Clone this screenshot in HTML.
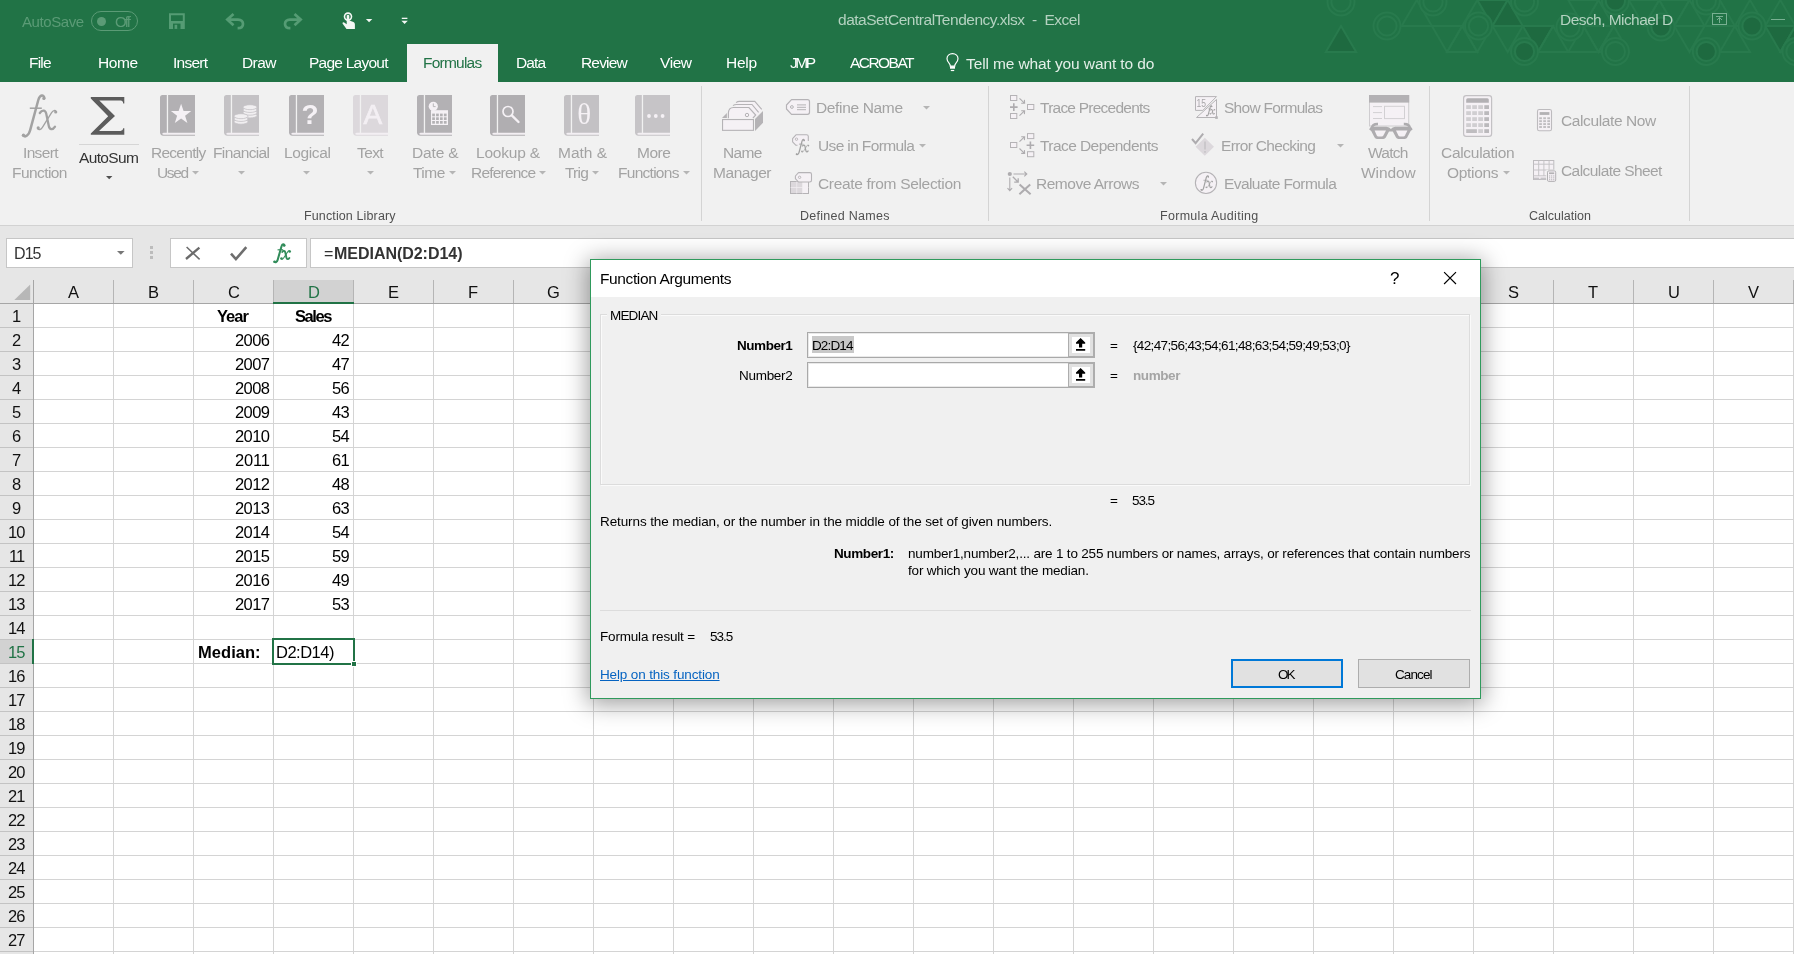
<!DOCTYPE html>
<html><head><meta charset="utf-8"><title>Excel</title>
<style>
html,body{margin:0;padding:0;background:#fff;}
body{width:1794px;height:954px;position:relative;overflow:hidden;font-family:"Liberation Sans",sans-serif;}
.t{position:absolute;white-space:pre;line-height:1;will-change:transform;}
.r{position:absolute;box-sizing:content-box;}
svg{position:absolute;overflow:visible;}
</style></head><body>
<div class="r" style="left:0px;top:0px;width:1794px;height:82px;background:#217346;"></div>
<svg class="r" style="left:0;top:0" width="1794" height="82" viewBox="0 0 1794 82"><polygon points="1401.6,26.0 1431.9,26.0 1416.8,0.0" fill="none" stroke="#287a4d" stroke-width="2"/><polygon points="1462.2,26.0 1492.5,26.0 1477.3,0.0" fill="none" stroke="#287a4d" stroke-width="2"/><polygon points="1477.3,0.0 1507.7,0.0 1492.5,26.0" fill="#1e6a40" stroke="#287a4d" stroke-width="2"/><polygon points="1492.5,26.0 1522.8,26.0 1507.7,0.0" fill="#1e6a40" stroke="#287a4d" stroke-width="2"/><polygon points="1568.2,0.0 1598.5,0.0 1583.4,26.0" fill="none" stroke="#287a4d" stroke-width="2"/><polygon points="1583.4,26.0 1613.7,26.0 1598.5,0.0" fill="none" stroke="#287a4d" stroke-width="2"/><polygon points="1628.8,0.0 1659.2,0.0 1644.0,26.0" fill="none" stroke="#287a4d" stroke-width="2"/><polygon points="1644.0,26.0 1674.3,26.0 1659.2,0.0" fill="none" stroke="#287a4d" stroke-width="2"/><polygon points="1659.2,0.0 1689.5,0.0 1674.3,26.0" fill="none" stroke="#287a4d" stroke-width="2"/><polygon points="1674.3,26.0 1704.6,26.0 1689.5,0.0" fill="none" stroke="#287a4d" stroke-width="2"/><polygon points="1704.6,26.0 1734.9,26.0 1719.8,0.0" fill="none" stroke="#287a4d" stroke-width="2"/><polygon points="1734.9,26.0 1765.2,26.0 1750.0,0.0" fill="none" stroke="#287a4d" stroke-width="2"/><polygon points="1765.2,26.0 1795.5,26.0 1780.3,0.0" fill="none" stroke="#287a4d" stroke-width="2"/><polygon points="1795.5,26.0 1825.8,26.0 1810.7,0.0" fill="#1e6a40" stroke="#287a4d" stroke-width="2"/><polygon points="1810.7,0.0 1841.0,0.0 1825.8,26.0" fill="none" stroke="#287a4d" stroke-width="2"/><polygon points="1325.8,52.0 1356.2,52.0 1341.0,26.0" fill="#1e6a40" stroke="#287a4d" stroke-width="2"/><polygon points="1431.9,26.0 1462.2,26.0 1447.0,52.0" fill="none" stroke="#287a4d" stroke-width="2"/><polygon points="1447.0,52.0 1477.3,52.0 1462.2,26.0" fill="none" stroke="#287a4d" stroke-width="2"/><polygon points="1462.2,26.0 1492.5,26.0 1477.3,52.0" fill="none" stroke="#287a4d" stroke-width="2"/><polygon points="1492.5,26.0 1522.8,26.0 1507.7,52.0" fill="none" stroke="#287a4d" stroke-width="2"/><polygon points="1522.8,26.0 1553.1,26.0 1538.0,52.0" fill="#1e6a40" stroke="#287a4d" stroke-width="2"/><polygon points="1538.0,52.0 1568.2,52.0 1553.1,26.0" fill="none" stroke="#287a4d" stroke-width="2"/><polygon points="1568.2,52.0 1598.5,52.0 1583.4,26.0" fill="none" stroke="#287a4d" stroke-width="2"/><polygon points="1583.4,26.0 1613.7,26.0 1598.5,52.0" fill="none" stroke="#287a4d" stroke-width="2"/><polygon points="1598.5,52.0 1628.8,52.0 1613.7,26.0" fill="none" stroke="#287a4d" stroke-width="2"/><polygon points="1674.3,26.0 1704.6,26.0 1689.5,52.0" fill="none" stroke="#287a4d" stroke-width="2"/><polygon points="1719.8,52.0 1750.0,52.0 1734.9,26.0" fill="none" stroke="#287a4d" stroke-width="2"/><polygon points="1765.2,26.0 1795.5,26.0 1780.3,52.0" fill="#1e6a40" stroke="#287a4d" stroke-width="2"/><polygon points="1780.3,52.0 1810.7,52.0 1795.5,26.0" fill="#1e6a40" stroke="#287a4d" stroke-width="2"/><polygon points="1795.5,26.0 1825.8,26.0 1810.7,52.0" fill="none" stroke="#287a4d" stroke-width="2"/><circle cx="1341" cy="2" r="13.5" fill="#217346" stroke="#287a4d" stroke-width="2"/><circle cx="1341" cy="2" r="9.6" fill="#217346" stroke="#287a4d" stroke-width="2"/><circle cx="1387" cy="26" r="13.5" fill="#217346" stroke="#287a4d" stroke-width="2"/><circle cx="1387" cy="26" r="9.6" fill="#217346" stroke="#287a4d" stroke-width="2"/><circle cx="1433" cy="2" r="13.5" fill="#217346" stroke="#287a4d" stroke-width="2"/><circle cx="1433" cy="2" r="9.6" fill="#217346" stroke="#287a4d" stroke-width="2"/><circle cx="1478.5" cy="26" r="13.5" fill="#217346" stroke="#287a4d" stroke-width="2"/><circle cx="1478.5" cy="26" r="9.6" fill="#217346" stroke="#287a4d" stroke-width="2"/><circle cx="1524.5" cy="51.5" r="13.5" fill="#217346" stroke="#287a4d" stroke-width="2"/><circle cx="1524.5" cy="51.5" r="9.6" fill="#1e6a40" stroke="#287a4d" stroke-width="2"/><circle cx="1524.5" cy="2" r="13.5" fill="#217346" stroke="#287a4d" stroke-width="2"/><circle cx="1524.5" cy="2" r="9.6" fill="#217346" stroke="#287a4d" stroke-width="2"/><circle cx="1570" cy="27" r="13.5" fill="#217346" stroke="#287a4d" stroke-width="2"/><circle cx="1570" cy="27" r="9.6" fill="#217346" stroke="#287a4d" stroke-width="2"/><circle cx="1615.4" cy="51.5" r="13.5" fill="#217346" stroke="#287a4d" stroke-width="2"/><circle cx="1615.4" cy="51.5" r="9.6" fill="#217346" stroke="#287a4d" stroke-width="2"/><circle cx="1615.4" cy="1" r="13.5" fill="#217346" stroke="#287a4d" stroke-width="2"/><circle cx="1615.4" cy="1" r="9.6" fill="#1e6a40" stroke="#287a4d" stroke-width="2"/><circle cx="1661" cy="27" r="13.5" fill="#217346" stroke="#287a4d" stroke-width="2"/><circle cx="1661" cy="27" r="9.6" fill="#1e6a40" stroke="#287a4d" stroke-width="2"/><circle cx="1706.3" cy="51.5" r="13.5" fill="#217346" stroke="#287a4d" stroke-width="2"/><circle cx="1706.3" cy="51.5" r="9.6" fill="#1e6a40" stroke="#287a4d" stroke-width="2"/><circle cx="1706.3" cy="1" r="13.5" fill="#217346" stroke="#287a4d" stroke-width="2"/><circle cx="1706.3" cy="1" r="9.6" fill="#217346" stroke="#287a4d" stroke-width="2"/><circle cx="1752" cy="26" r="13.5" fill="#217346" stroke="#287a4d" stroke-width="2"/><circle cx="1752" cy="26" r="9.6" fill="#1e6a40" stroke="#287a4d" stroke-width="2"/><circle cx="1796" cy="51.5" r="13.5" fill="#217346" stroke="#287a4d" stroke-width="2"/><circle cx="1796" cy="51.5" r="9.6" fill="#217346" stroke="#287a4d" stroke-width="2"/></svg>
<div class="r" style="left:0px;top:82px;width:1794px;height:143px;background:#f1f1f1;"></div>
<div class="r" style="left:0px;top:225px;width:1794px;height:1px;background:#d2d2d2;"></div>
<div class="r" style="left:0px;top:226px;width:1794px;height:78px;background:#e6e6e6;"></div>
<div class="r" style="left:407px;top:44px;width:91px;height:38px;background:#f1f1f1;"></div>
<span class="t" style="left:21.50px;top:14.00px;font-size:15px;color:#5b9b76;letter-spacing:-0.420px;">AutoSave</span>
<div class="r" style="left:91px;top:11px;width:45px;height:18px;border:1px solid #5b9b76;border-radius:10px"></div>
<div class="r" style="left:96.5px;top:16.7px;width:9px;height:9px;border-radius:5px;background:#5b9b76"></div>
<span class="t" style="left:114.70px;top:14.00px;font-size:15px;color:#5b9b76;letter-spacing:-1.935px;">Off</span>
<svg class="r" style="left:0;top:0" width="1794" height="44" viewBox="0 0 1794 44"><path d="M169 13.3 H184.8 V28.9 H169 Z M171 15.3 V21 H182.8 V15.3 Z" fill="#559c74" fill-rule="evenodd"/><rect x="173" y="23.6" width="7.5" height="5.3" fill="#217346"/><rect x="174.6" y="24.8" width="2.6" height="4.1" fill="#559c74"/><path d="M233.5 14 L227.3 19.6 L233.5 25.2 M227.8 19.6 H238 C241.6 19.6 243 22 243 24 C243 26.4 241 28.2 237.6 28.2" fill="none" stroke="#559c74" stroke-width="2.7" stroke-linejoin="miter"/><path d="M294.5 14 L300.7 19.6 L294.5 25.2 M300.2 19.6 H290 C286.4 19.6 285 22 285 24 C285 26.4 287 28.2 290.4 28.2" fill="none" stroke="#559c74" stroke-width="2.7" stroke-linejoin="miter"/><circle cx="348" cy="16.6" r="3.5" fill="none" stroke="#f3f7f4" stroke-width="1.6"/><path d="M346.7 15.5 Q348 14.2 349.3 15.5 V20.5 L353.5 22 Q355 22.6 354.9 24.5 V28.9 H346.5 L342.5 23.6 Q342.3 22.2 343.8 22.2 L346.7 24.2 Z" fill="#f3f7f4"/><path d="M365.9 19 H372.3 L369.1 22.3 Z" fill="#f3f7f4"/><rect x="401.8" y="17.7" width="5.6" height="1.3" fill="#f3f7f4"/><path d="M401.4 20.8 H407.8 L404.6 24 Z" fill="#f3f7f4"/><rect x="1712.5" y="13.5" width="14" height="11" fill="none" stroke="#78b092" stroke-width="1"/><path d="M1716 16.5 H1723 M1719.5 23 V17.5 M1717 20 L1719.5 17.5 L1722 20" fill="none" stroke="#78b092" stroke-width="1"/><rect x="1771" y="19" width="14" height="1" fill="#78b092"/></svg><svg class="r" style="left:0;top:44px" width="1794" height="38" viewBox="0 44 1794 38"><path d="M952.5 53.6 C949.2 53.6 947 56 947 58.8 C947 60.8 948 62 949.2 63.3 C950 64.2 950.3 65 950.3 66.2 H954.7 C954.7 65 955 64.2 955.8 63.3 C957 62 958 60.8 958 58.8 C958 56 955.8 53.6 952.5 53.6 Z" fill="none" stroke="#fff" stroke-width="1.2"/><rect x="950" y="66.2" width="5" height="2.5" fill="#fff"/><path d="M950.8 70.5 H954.2" stroke="#fff" stroke-width="1.2"/></svg>
<span class="t" style="left:838.00px;top:12.00px;font-size:15.5px;color:#b4d2c0;letter-spacing:-0.486px;">dataSetCentralTendency.xlsx  -  Excel</span>
<span class="t" style="left:1560.20px;top:12.00px;font-size:15.5px;color:#b4d2c0;letter-spacing:-0.557px;">Desch, Michael D</span>
<span class="t" style="left:29.30px;top:55.00px;font-size:15.5px;color:#fff;letter-spacing:-0.790px;">File</span>
<span class="t" style="left:98.30px;top:55.00px;font-size:15.5px;color:#fff;letter-spacing:-0.385px;">Home</span>
<span class="t" style="left:172.60px;top:55.00px;font-size:15.5px;color:#fff;letter-spacing:-0.733px;">Insert</span>
<span class="t" style="left:241.50px;top:55.00px;font-size:15.5px;color:#fff;letter-spacing:-0.603px;">Draw</span>
<span class="t" style="left:309.30px;top:55.00px;font-size:15.5px;color:#fff;letter-spacing:-0.755px;">Page Layout</span>
<span class="t" style="left:515.80px;top:55.00px;font-size:15.5px;color:#fff;letter-spacing:-0.884px;">Data</span>
<span class="t" style="left:580.50px;top:55.00px;font-size:15.5px;color:#fff;letter-spacing:-0.834px;">Review</span>
<span class="t" style="left:660.30px;top:55.00px;font-size:15.5px;color:#fff;letter-spacing:-0.419px;">View</span>
<span class="t" style="left:725.50px;top:55.00px;font-size:15.5px;color:#fff;letter-spacing:-0.261px;">Help</span>
<span class="t" style="left:790.30px;top:55.00px;font-size:15.5px;color:#fff;letter-spacing:-2.450px;">JMP</span>
<span class="t" style="left:849.50px;top:55.00px;font-size:15.5px;color:#fff;letter-spacing:-1.547px;">ACROBAT</span>
<span class="t" style="left:422.50px;top:55.00px;font-size:15.5px;color:#217346;letter-spacing:-0.772px;">Formulas</span>
<span class="t" style="left:966.30px;top:56.00px;font-size:15.5px;color:#e4efe8;letter-spacing:-0.114px;">Tell me what you want to do</span>
<div class="r" style="left:701px;top:86px;width:1px;height:135px;background:#d4d4d4;"></div>
<div class="r" style="left:988px;top:86px;width:1px;height:135px;background:#d4d4d4;"></div>
<div class="r" style="left:1429px;top:86px;width:1px;height:135px;background:#d4d4d4;"></div>
<div class="r" style="left:1689px;top:86px;width:1px;height:135px;background:#d4d4d4;"></div>
<span class="t" style="left:22.50px;top:145.00px;font-size:15.5px;color:#a3a3a3;letter-spacing:-0.653px;">Insert</span>
<span class="t" style="left:12.40px;top:165.00px;font-size:15.5px;color:#a3a3a3;letter-spacing:-0.578px;">Function</span>
<span class="t" style="left:78.70px;top:150.00px;font-size:15.5px;color:#333;letter-spacing:-0.659px;">AutoSum</span>
<svg class="r" style="left:105.8px;top:176.0px" width="6.4" height="4.2"><path d="M0 0 H6.4 L3.2 3.2 Z" fill="#505050"/></svg>
<div class="r" style="left:79px;top:144px;width:60px;height:1px;background:#d6d6d6;"></div>
<span class="t" style="left:150.50px;top:145.00px;font-size:15.5px;color:#a3a3a3;letter-spacing:-0.730px;">Recently</span>
<span class="t" style="left:156.50px;top:165.00px;font-size:15.5px;color:#a3a3a3;letter-spacing:-1.359px;">Used</span>
<svg class="r" style="left:192.0px;top:170.8px" width="7" height="4.5"><path d="M0 0 H7 L3.5 3.5 Z" fill="#b5b5b5"/></svg>
<span class="t" style="left:213.30px;top:145.00px;font-size:15.5px;color:#a3a3a3;letter-spacing:-0.629px;">Financial</span>
<svg class="r" style="left:238.3px;top:170.8px" width="7" height="4.5"><path d="M0 0 H7 L3.5 3.5 Z" fill="#b5b5b5"/></svg>
<span class="t" style="left:283.60px;top:145.00px;font-size:15.5px;color:#a3a3a3;letter-spacing:-0.370px;">Logical</span>
<svg class="r" style="left:303.3px;top:170.8px" width="7" height="4.5"><path d="M0 0 H7 L3.5 3.5 Z" fill="#b5b5b5"/></svg>
<span class="t" style="left:357.40px;top:145.00px;font-size:15.5px;color:#a3a3a3;letter-spacing:-0.609px;">Text</span>
<svg class="r" style="left:367.2px;top:170.8px" width="7" height="4.5"><path d="M0 0 H7 L3.5 3.5 Z" fill="#b5b5b5"/></svg>
<span class="t" style="left:411.60px;top:145.00px;font-size:15.5px;color:#a3a3a3;letter-spacing:-0.157px;">Date &amp;</span>
<span class="t" style="left:413.00px;top:165.00px;font-size:15.5px;color:#a3a3a3;letter-spacing:-0.522px;">Time</span>
<svg class="r" style="left:449.4px;top:170.8px" width="7" height="4.5"><path d="M0 0 H7 L3.5 3.5 Z" fill="#b5b5b5"/></svg>
<span class="t" style="left:476.20px;top:145.00px;font-size:15.5px;color:#a3a3a3;letter-spacing:-0.215px;">Lookup &amp;</span>
<span class="t" style="left:470.70px;top:165.00px;font-size:15.5px;color:#a3a3a3;letter-spacing:-0.790px;">Reference</span>
<svg class="r" style="left:539.4px;top:170.8px" width="7" height="4.5"><path d="M0 0 H7 L3.5 3.5 Z" fill="#b5b5b5"/></svg>
<span class="t" style="left:557.50px;top:145.00px;font-size:15.5px;color:#a3a3a3;letter-spacing:-0.021px;">Math &amp;</span>
<span class="t" style="left:564.50px;top:165.00px;font-size:15.5px;color:#a3a3a3;letter-spacing:-0.773px;">Trig</span>
<svg class="r" style="left:592.4px;top:170.8px" width="7" height="4.5"><path d="M0 0 H7 L3.5 3.5 Z" fill="#b5b5b5"/></svg>
<span class="t" style="left:636.50px;top:145.00px;font-size:15.5px;color:#a3a3a3;letter-spacing:-0.470px;">More</span>
<span class="t" style="left:617.50px;top:165.00px;font-size:15.5px;color:#a3a3a3;letter-spacing:-0.724px;">Functions</span>
<svg class="r" style="left:682.8px;top:170.8px" width="7" height="4.5"><path d="M0 0 H7 L3.5 3.5 Z" fill="#b5b5b5"/></svg>
<span class="t" style="left:723.40px;top:145.00px;font-size:15.5px;color:#a3a3a3;letter-spacing:-0.685px;">Name</span>
<span class="t" style="left:713.40px;top:165.00px;font-size:15.5px;color:#a3a3a3;letter-spacing:-0.446px;">Manager</span>
<span class="t" style="left:1368.30px;top:145.00px;font-size:15.5px;color:#a3a3a3;letter-spacing:-0.738px;">Watch</span>
<span class="t" style="left:1361.20px;top:165.00px;font-size:15.5px;color:#a3a3a3;letter-spacing:-0.093px;">Window</span>
<span class="t" style="left:1441.00px;top:145.00px;font-size:15.5px;color:#a3a3a3;letter-spacing:-0.298px;">Calculation</span>
<span class="t" style="left:1447.20px;top:165.00px;font-size:15.5px;color:#a3a3a3;letter-spacing:-0.302px;">Options</span>
<svg class="r" style="left:1502.5px;top:170.8px" width="7" height="4.5"><path d="M0 0 H7 L3.5 3.5 Z" fill="#b5b5b5"/></svg>
<span class="t" style="left:815.70px;top:100.00px;font-size:15.5px;color:#a3a3a3;letter-spacing:-0.346px;">Define Name</span>
<svg class="r" style="left:923.4px;top:105.8px" width="7" height="4.5"><path d="M0 0 H7 L3.5 3.5 Z" fill="#b5b5b5"/></svg>
<span class="t" style="left:818.40px;top:138.00px;font-size:15.5px;color:#a3a3a3;letter-spacing:-0.624px;">Use in Formula</span>
<svg class="r" style="left:919.4px;top:143.8px" width="7" height="4.5"><path d="M0 0 H7 L3.5 3.5 Z" fill="#b5b5b5"/></svg>
<span class="t" style="left:818.40px;top:176.00px;font-size:15.5px;color:#a3a3a3;letter-spacing:-0.330px;">Create from Selection</span>
<span class="t" style="left:1039.50px;top:100.00px;font-size:15.5px;color:#a3a3a3;letter-spacing:-0.765px;">Trace Precedents</span>
<span class="t" style="left:1039.50px;top:138.00px;font-size:15.5px;color:#a3a3a3;letter-spacing:-0.563px;">Trace Dependents</span>
<span class="t" style="left:1036.40px;top:176.00px;font-size:15.5px;color:#a3a3a3;letter-spacing:-0.492px;">Remove Arrows</span>
<svg class="r" style="left:1160.4px;top:181.6px" width="7" height="4.5"><path d="M0 0 H7 L3.5 3.5 Z" fill="#b5b5b5"/></svg>
<span class="t" style="left:1223.70px;top:100.00px;font-size:15.5px;color:#a3a3a3;letter-spacing:-0.732px;">Show Formulas</span>
<span class="t" style="left:1220.60px;top:138.00px;font-size:15.5px;color:#a3a3a3;letter-spacing:-0.659px;">Error Checking</span>
<svg class="r" style="left:1336.5px;top:143.8px" width="7" height="4.5"><path d="M0 0 H7 L3.5 3.5 Z" fill="#b5b5b5"/></svg>
<span class="t" style="left:1223.70px;top:176.00px;font-size:15.5px;color:#a3a3a3;letter-spacing:-0.579px;">Evaluate Formula</span>
<span class="t" style="left:1561.30px;top:113.00px;font-size:15.5px;color:#a3a3a3;letter-spacing:-0.390px;">Calculate Now</span>
<span class="t" style="left:1561.30px;top:163.00px;font-size:15.5px;color:#a3a3a3;letter-spacing:-0.574px;">Calculate Sheet</span>
<span class="t" style="left:304.00px;top:210.00px;font-size:12.5px;color:#505050;letter-spacing:0.125px;">Function Library</span>
<span class="t" style="left:800.30px;top:210.00px;font-size:12.5px;color:#505050;letter-spacing:0.279px;">Defined Names</span>
<span class="t" style="left:1159.50px;top:210.00px;font-size:12.5px;color:#505050;letter-spacing:0.293px;">Formula Auditing</span>
<span class="t" style="left:1528.70px;top:210.00px;font-size:12.5px;color:#505050;letter-spacing:0.006px;">Calculation</span>
<svg class="r" style="left:0;top:82px" width="1794" height="144" viewBox="0 82 1794 144" font-family="Liberation Sans, sans-serif"><g transform="translate(0.00,0.00) scale(1.0000,1.0000)" fill="none" stroke="#a2a2a2" stroke-linecap="round"><path d="M44.3 98.2 C44 94.2 39.9 94.4 38.3 100 L30.1 130.4 C28.8 135.2 25.6 137.8 23 135.4" stroke-width="2.50"/><path d="M29.8 108.2 H41.8" stroke-width="1.50" stroke-linecap="butt"/><path d="M39.8 113 C42.2 109.4 45.4 110 46.2 113.6 L48.8 126 C49.6 129.8 52.6 130.4 55 126.6" stroke-width="2.30"/><path d="M37.6 128.4 C38.8 130.4 40.8 129.8 42.4 127.4 L51.6 112.6 C53.2 110.2 55.2 109.8 56.2 111.6" stroke-width="1.30"/><circle cx="43.9" cy="98.4" r="1.60" fill="#a2a2a2" stroke="none"/><circle cx="23.5" cy="135.2" r="1.60" fill="#a2a2a2" stroke="none"/><circle cx="38.2" cy="127.9" r="1.60" fill="#a2a2a2" stroke="none"/><circle cx="55.7" cy="112" r="1.60" fill="#a2a2a2" stroke="none"/></g><path d="M90.8 96.9 H124.3 V103.6 H123.2 Q123 100.7 120.6 100.6 H99.3 L115 115.9 L99 131 H120.6 Q123 130.9 123.2 128.2 H124.3 V134.8 H90.8 V133.4 L108.2 116.3 L90.8 98.4 Z" fill="#5c5c5c"/><g><path d="M162.5 95 H195 V135.8 H163.2 Q160.2 135.6 160 132.6 V97.5 Q160 95 162.5 95 Z" fill="#b2b0b3"/><rect x="166.8" y="95" width="1.3" height="38" fill="#f1f1f1"/><path d="M163.8 132.7 H195 V134.8 H163.8 Q162.3 134.7 162.3 133.75 Q162.3 132.8 163.8 132.7 Z" fill="#f3eff3"/><polygon points="181.10,103.70 183.57,111.00 191.28,111.09 185.09,115.70 187.39,123.06 181.10,118.60 174.81,123.06 177.11,115.70 170.92,111.09 178.63,111.00" fill="#f5f1f5"/></g><g><path d="M226.5 95 H259 V135.8 H227.2 Q224.2 135.6 224 132.6 V97.5 Q224 95 226.5 95 Z" fill="#c4c2c5"/><rect x="230.8" y="95" width="1.3" height="38" fill="#f1f1f1"/><path d="M227.8 132.7 H259 V134.8 H227.8 Q226.3 134.7 226.3 133.75 Q226.3 132.8 227.8 132.7 Z" fill="#f3eff3"/><ellipse cx="250" cy="115.45" rx="7" ry="2.5" fill="#f1eff1" stroke="#c4c2c5" stroke-width="0.8"/><ellipse cx="250" cy="112.7" rx="7" ry="2.5" fill="#f1eff1" stroke="#c4c2c5" stroke-width="0.8"/><ellipse cx="250" cy="109.95" rx="7" ry="2.5" fill="#f1eff1" stroke="#c4c2c5" stroke-width="0.8"/><ellipse cx="250" cy="107.2" rx="7" ry="2.5" fill="#f1eff1" stroke="#c4c2c5" stroke-width="0.8"/><ellipse cx="241" cy="121.7" rx="7" ry="2.5" fill="#f1eff1" stroke="#c4c2c5" stroke-width="0.8"/><ellipse cx="241" cy="118.95" rx="7" ry="2.5" fill="#f1eff1" stroke="#c4c2c5" stroke-width="0.8"/><ellipse cx="241" cy="116.2" rx="7" ry="2.5" fill="#f1eff1" stroke="#c4c2c5" stroke-width="0.8"/></g><g><path d="M291.5 95 H324 V135.8 H292.2 Q289.2 135.6 289 132.6 V97.5 Q289 95 291.5 95 Z" fill="#b3b1b4"/><rect x="295.8" y="95" width="1.3" height="38" fill="#f1f1f1"/><path d="M292.8 132.7 H324 V134.8 H292.8 Q291.3 134.7 291.3 133.75 Q291.3 132.8 292.8 132.7 Z" fill="#f3eff3"/><text x="301.4" y="124.4" font-size="28" font-weight="bold" fill="#f5f1f5">?</text></g><g><path d="M355.5 95 H388 V135.8 H356.2 Q353.2 135.6 353 132.6 V97.5 Q353 95 355.5 95 Z" fill="#dcd8dc"/><rect x="359.8" y="95" width="1.3" height="38" fill="#f1f1f1"/><path d="M356.8 132.7 H388 V134.8 H356.8 Q355.3 134.7 355.3 133.75 Q355.3 132.8 356.8 132.7 Z" fill="#f3eff3"/><text x="363.5" y="124.3" font-size="28" fill="#f3eff3" stroke="#f3eff3" stroke-width="0.7">A</text></g><g><path d="M419.5 95 H452 V135.8 H420.2 Q417.2 135.6 417 132.6 V97.5 Q417 95 419.5 95 Z" fill="#b3b1b4"/><rect x="423.8" y="95" width="1.3" height="38" fill="#f1f1f1"/><path d="M420.8 132.7 H452 V134.8 H420.8 Q419.3 134.7 419.3 133.75 Q419.3 132.8 420.8 132.7 Z" fill="#f3eff3"/><circle cx="433.3" cy="106.3" r="4.6" fill="#f5f1f5"/><path d="M433.3 103.4 V106.6 H435.6" stroke="#b3b1b4" stroke-width="0.9" fill="none"/><rect x="431" y="110.2" width="17" height="14.8" fill="#f5f1f5"/><rect x="432.2" y="113.6" width="2.7" height="2.7" fill="#b3b1b4"/><rect x="432.2" y="117.3" width="2.7" height="2.7" fill="#b3b1b4"/><rect x="432.2" y="121" width="2.7" height="2.7" fill="#b3b1b4"/><rect x="436.1" y="113.6" width="2.7" height="2.7" fill="#b3b1b4"/><rect x="436.1" y="117.3" width="2.7" height="2.7" fill="#b3b1b4"/><rect x="436.1" y="121" width="2.7" height="2.7" fill="#b3b1b4"/><rect x="440" y="113.6" width="2.7" height="2.7" fill="#b3b1b4"/><rect x="440" y="117.3" width="2.7" height="2.7" fill="#b3b1b4"/><rect x="440" y="121" width="2.7" height="2.7" fill="#b3b1b4"/><rect x="443.9" y="113.6" width="2.7" height="2.7" fill="#b3b1b4"/><rect x="443.9" y="117.3" width="2.7" height="2.7" fill="#b3b1b4"/><rect x="443.9" y="121" width="2.7" height="2.7" fill="#b3b1b4"/></g><g><path d="M492.5 95 H525 V135.8 H493.2 Q490.2 135.6 490 132.6 V97.5 Q490 95 492.5 95 Z" fill="#b0aeb1"/><rect x="496.8" y="95" width="1.3" height="38" fill="#f1f1f1"/><path d="M493.8 132.7 H525 V134.8 H493.8 Q492.3 134.7 492.3 133.75 Q492.3 132.8 493.8 132.7 Z" fill="#f3eff3"/><circle cx="508" cy="111.5" r="5" fill="none" stroke="#f5f1f5" stroke-width="1.7"/><path d="M511.8 115.3 L518.5 122" stroke="#f5f1f5" stroke-width="2.4" stroke-linecap="round"/></g><g><path d="M566.5 95 H599 V135.8 H567.2 Q564.2 135.6 564 132.6 V97.5 Q564 95 566.5 95 Z" fill="#c3c1c4"/><rect x="570.8" y="95" width="1.3" height="38" fill="#f1f1f1"/><path d="M567.8 132.7 H599 V134.8 H567.8 Q566.3 134.7 566.3 133.75 Q566.3 132.8 567.8 132.7 Z" fill="#f3eff3"/><text x="577.2" y="123.5" font-family="Liberation Serif, serif" font-size="29" fill="#f5f1f5">θ</text></g><g><path d="M637.5 95 H670 V135.8 H638.2 Q635.2 135.6 635 132.6 V97.5 Q635 95 637.5 95 Z" fill="#c6c4c7"/><rect x="641.8" y="95" width="1.3" height="38" fill="#f1f1f1"/><path d="M638.8 132.7 H670 V134.8 H638.8 Q637.3 134.7 637.3 133.75 Q637.3 132.8 638.8 132.7 Z" fill="#f3eff3"/><circle cx="649" cy="116" r="1.9" fill="#f5f1f5"/><circle cx="655.8" cy="116" r="1.9" fill="#f5f1f5"/><circle cx="662.6" cy="116" r="1.9" fill="#f5f1f5"/></g><path d="M736.1 102.6 Q737.5 101.4 739.4 101.4 H754.8 L761.9 109.4 L756 117 H736 Z" fill="#f5f1f5"/><path d="M736.1 102.6 Q737.5 101.4 739.4 101.4 H754.8 L761.7 109.3" fill="none" stroke="#b5b3b6" stroke-width="1.1"/><path d="M733 105.7 Q734.4 104.5 736.3 104.5 H752 L758.6 112.4" fill="none" stroke="#b5b3b6" stroke-width="1.1"/><path d="M728.4 118.2 V112.8 Q728.6 107.7 733.4 107.5 H748.9 L755.7 115 L752.9 118.2 Z" fill="#f5f1f5"/><path d="M728.4 118.2 V112.8 Q728.6 107.7 733.4 107.5 H748.9 L755.7 115 L752.9 118.2" fill="none" stroke="#b5b3b6" stroke-width="1.15"/><circle cx="747" cy="115" r="1.7" fill="none" stroke="#b5b3b6" stroke-width="1"/><path d="M722 117.9 H726.9 V113 Z" fill="#b5b3b6"/><rect x="722.55" y="119.55" width="30.9" height="10.8" fill="#f5f1f5" stroke="#b5b3b6" stroke-width="1.1"/><path d="M755 119 L763 111 V122.7 L755 130.9 Z" fill="#b5b3b6"/><path d="M791.5 99.7 H807.5 Q809.5 99.7 809.5 101.7 V112.3 Q809.5 114.3 807.5 114.3 H791.5 L786.5 109 V105 Z" fill="#f5f1f5" stroke="#b5b3b6" stroke-width="1.2" stroke-linejoin="round"/><circle cx="791.9" cy="107" r="1.4" fill="none" stroke="#b5b3b6" stroke-width="1"/><path d="M797 104.9 H806 M797 107.3 H806 M797 109.7 H806" stroke="#b5b3b6" stroke-width="1"/><path d="M797.5 145.3 H796 L792.6 141.8 V138.6 L796 134.8 H806.5 Q808.3 134.8 808.3 136.6 V141" fill="#f5f1f5" stroke="#b5b3b6" stroke-width="1.1" stroke-linejoin="round"/><circle cx="796.5" cy="139.2" r="1.2" fill="none" stroke="#b5b3b6" stroke-width="0.9"/><g transform="translate(788.07,104.04) scale(0.3649,0.3705)" fill="none" stroke="#a2a2a2" stroke-linecap="round"><path d="M44.3 98.2 C44 94.2 39.9 94.4 38.3 100 L30.1 130.4 C28.8 135.2 25.6 137.8 23 135.4" stroke-width="3.62"/><path d="M29.8 108.2 H41.8" stroke-width="2.17" stroke-linecap="butt"/><path d="M39.8 113 C42.2 109.4 45.4 110 46.2 113.6 L48.8 126 C49.6 129.8 52.6 130.4 55 126.6" stroke-width="3.33"/><path d="M37.6 128.4 C38.8 130.4 40.8 129.8 42.4 127.4 L51.6 112.6 C53.2 110.2 55.2 109.8 56.2 111.6" stroke-width="1.89"/><circle cx="43.9" cy="98.4" r="2.32" fill="#a2a2a2" stroke="none"/><circle cx="23.5" cy="135.2" r="2.32" fill="#a2a2a2" stroke="none"/><circle cx="38.2" cy="127.9" r="2.32" fill="#a2a2a2" stroke="none"/><circle cx="55.7" cy="112" r="2.32" fill="#a2a2a2" stroke="none"/></g><rect x="790.5" y="181.5" width="18" height="12" fill="#f5f1f5" stroke="#b5b3b6" stroke-width="1"/><rect x="791" y="182" width="11.5" height="5.5" fill="#dcd8dc"/><rect x="791" y="187.5" width="11.5" height="5.5" fill="#dcd8dc"/><path d="M796.7 181.5 V193.5 M802.6 181.5 V193.5 M790.5 187.5 H808.5" stroke="#f5f1f5" stroke-width="0.8" opacity="0.7"/><path d="M798.5 172.6 H809.8 Q811.5 172.6 811.5 174.3 V180.3 Q811.5 182 809.8 182 H798.5 L795.4 178.6 V176 Z" fill="#f5f1f5" stroke="#b5b3b6" stroke-width="1.1" stroke-linejoin="round"/><circle cx="799.6" cy="177.3" r="1.2" fill="none" stroke="#b5b3b6" stroke-width="0.9"/><rect x="1010.5" y="95.5" width="6.3" height="5" fill="#f5f1f5" stroke="#b5b3b6" stroke-width="1"/><rect x="1010.5" y="113.5" width="6.3" height="5" fill="#f5f1f5" stroke="#b5b3b6" stroke-width="1"/><rect x="1027.5" y="104.5" width="6.3" height="5" fill="#f5f1f5" stroke="#b5b3b6" stroke-width="1"/><path d="M1010 107.1 H1017.6 M1013.8 103.3 V110.9" stroke="#aeacaf" stroke-width="1.6"/><path d="M1019.5 98.3 L1024.6 103.3 M1021.2 103.2 L1024.6 103.3 L1024.4 99.9" fill="none" stroke="#aeacaf" stroke-width="1.1"/><path d="M1019.5 115.7 L1024.6 110.7 M1024.4 114.1 L1024.6 110.7 L1021.2 110.8" fill="none" stroke="#aeacaf" stroke-width="1.1"/><rect x="1010.5" y="142.5" width="6.3" height="5" fill="#f5f1f5" stroke="#b5b3b6" stroke-width="1"/><rect x="1027.5" y="133.6" width="6.3" height="5" fill="#f5f1f5" stroke="#b5b3b6" stroke-width="1"/><rect x="1027.5" y="151.7" width="6.3" height="5" fill="#f5f1f5" stroke="#b5b3b6" stroke-width="1"/><path d="M1026.6 145.2 H1034.2 M1030.4 141.4 V149" stroke="#aeacaf" stroke-width="1.6"/><path d="M1019.5 141.7 L1024.6 136.7 M1024.4 140.1 L1024.6 136.7 L1021.2 136.8" fill="none" stroke="#aeacaf" stroke-width="1.1"/><path d="M1019.5 148.5 L1024.6 153.5 M1021.2 153.4 L1024.6 153.5 L1024.4 150.1" fill="none" stroke="#aeacaf" stroke-width="1.1"/><circle cx="1009.8" cy="174" r="2.1" fill="#aeacaf"/><path d="M1013.5 174.0 L1026.8 174.0 M1024.3 176.3 L1026.8 174.0 L1024.3 171.7" fill="none" stroke="#aeacaf" stroke-width="1.1"/><path d="M1009.8 177.5 L1009.8 190.6 M1007.5 188.1 L1009.8 190.6 L1012.1 188.1" fill="none" stroke="#aeacaf" stroke-width="1.1"/><path d="M1012.8 176.8 L1018 182 M1018.2 178.2 V182.2 H1014.2" fill="none" stroke="#aeacaf" stroke-width="1.3"/><path d="M1019.6 184.6 L1030.6 194.2 M1030.2 184.4 L1019.4 194.2" stroke="#aeacaf" stroke-width="2"/><path d="M1195.5 96.6 H1216.5 L1202.8 110.4 H1195.5 Z" fill="#f5f1f5" stroke="#b5b3b6" stroke-width="1"/><path d="M1216.5 99.5 V117.5 H1196.5 Z" fill="#f5f1f5" stroke="#b5b3b6" stroke-width="1"/><rect x="1215.2" y="116.3" width="2.6" height="2.6" fill="#b5b3b6"/><text x="1196.6" y="107.4" font-size="11.5" fill="#a8a6a9" textLength="9.5" lengthAdjust="spacingAndGlyphs">15</text><g transform="translate(1200.93,82.16) scale(0.2443,0.2470)" fill="none" stroke="#a2a2a2" stroke-linecap="round"><path d="M44.3 98.2 C44 94.2 39.9 94.4 38.3 100 L30.1 130.4 C28.8 135.2 25.6 137.8 23 135.4" stroke-width="4.50"/><path d="M29.8 108.2 H41.8" stroke-width="2.70" stroke-linecap="butt"/><path d="M39.8 113 C42.2 109.4 45.4 110 46.2 113.6 L48.8 126 C49.6 129.8 52.6 130.4 55 126.6" stroke-width="4.14"/><path d="M37.6 128.4 C38.8 130.4 40.8 129.8 42.4 127.4 L51.6 112.6 C53.2 110.2 55.2 109.8 56.2 111.6" stroke-width="2.44"/><circle cx="43.9" cy="98.4" r="2.88" fill="#a2a2a2" stroke="none"/><circle cx="23.5" cy="135.2" r="2.88" fill="#a2a2a2" stroke="none"/><circle cx="38.2" cy="127.9" r="2.88" fill="#a2a2a2" stroke="none"/><circle cx="55.7" cy="112" r="2.88" fill="#a2a2a2" stroke="none"/></g><path d="M1204.8 137.8 L1214 146.8 L1204.8 155.8 L1195.6 146.8 Z" fill="#dcd8dc"/><path d="M1205 141.5 V149.5 M1205 151 V152.8" stroke="#c3c1c4" stroke-width="1.4"/><path d="M1192 139 L1195.6 143.2 L1203.2 133.6" fill="none" stroke="#aeacaf" stroke-width="2"/><circle cx="1206" cy="182.9" r="10.6" fill="#f5f1f5" stroke="#b5b3b6" stroke-width="1.1"/><g transform="translate(1193.34,142.24) scale(0.3391,0.3515)" fill="none" stroke="#a2a2a2" stroke-linecap="round"><path d="M44.3 98.2 C44 94.2 39.9 94.4 38.3 100 L30.1 130.4 C28.8 135.2 25.6 137.8 23 135.4" stroke-width="3.62"/><path d="M29.8 108.2 H41.8" stroke-width="2.17" stroke-linecap="butt"/><path d="M39.8 113 C42.2 109.4 45.4 110 46.2 113.6 L48.8 126 C49.6 129.8 52.6 130.4 55 126.6" stroke-width="3.33"/><path d="M37.6 128.4 C38.8 130.4 40.8 129.8 42.4 127.4 L51.6 112.6 C53.2 110.2 55.2 109.8 56.2 111.6" stroke-width="1.89"/><circle cx="43.9" cy="98.4" r="2.32" fill="#a2a2a2" stroke="none"/><circle cx="23.5" cy="135.2" r="2.32" fill="#a2a2a2" stroke="none"/><circle cx="38.2" cy="127.9" r="2.32" fill="#a2a2a2" stroke="none"/><circle cx="55.7" cy="112" r="2.32" fill="#a2a2a2" stroke="none"/></g><rect x="1369.5" y="95.5" width="39.2" height="30.5" fill="#f5f1f5" stroke="#cfcdd0" stroke-width="1"/><rect x="1369" y="95" width="40.2" height="7.6" fill="#b3b1b4"/><rect x="1384.5" y="106.3" width="20" height="12.3" fill="none" stroke="#d2d0d3" stroke-width="1"/><path d="M1373 106.6 H1382 M1373 112.6 H1382 M1373 118.5 H1382" stroke="#d2d0d3" stroke-width="1"/><path d="M1369.2 129.5 Q1369.5 127.5 1372 126.8 H1386.5 Q1389.5 127.2 1390.9 129 Q1392.3 127.2 1395.3 126.8 H1409.8 Q1412.3 127.5 1412.6 129.5 L1410.6 131 L1407.2 137.6 Q1406.5 138.9 1404.8 138.9 H1398.4 Q1396.8 138.9 1396 137.5 L1392.8 131.4 H1389 L1385.8 137.5 Q1385 138.9 1383.4 138.9 H1377 Q1375.3 138.9 1374.6 137.6 L1371.2 131 Z" fill="#aeacaf"/><path d="M1374.6 130.5 H1386 L1383.4 135.5 Q1382.8 136.4 1381.8 136.4 H1378.3 Q1377.3 136.4 1376.8 135.5 Z" fill="#f5f1f5"/><path d="M1396 130.5 H1407.4 L1405 135.5 Q1404.5 136.4 1403.5 136.4 H1400 Q1399 136.4 1398.4 135.5 Z" fill="#f5f1f5"/><path d="M1370.5 128 Q1371.5 122.5 1378 122.8 V125.2 Q1374 125 1373 128 Z M1411.3 128 Q1410.3 122.5 1403.8 122.8 V125.2 Q1407.8 125 1408.8 128 Z" fill="#aeacaf"/><rect x="1463.6" y="95.6" width="28" height="40.8" rx="2.6" fill="#f5f1f5" stroke="#c3c1c4" stroke-width="1.2"/><path d="M1466.2 102.7 V99.8 Q1466.2 98.3 1467.7 98.3 H1487.3 Q1488.8 98.3 1488.8 99.8 V102.7 Z" fill="#b3b1b4"/><rect x="1466.2" y="105.2" width="4.7" height="3.8" fill="#d0ced1"/><rect x="1472.23" y="105.2" width="4.7" height="3.8" fill="#d0ced1"/><rect x="1478.26" y="105.2" width="4.7" height="3.8" fill="#d0ced1"/><rect x="1484.29" y="105.2" width="4.7" height="3.8" fill="#bbb9bc"/><rect x="1466.2" y="111.2" width="4.7" height="3.8" fill="#d0ced1"/><rect x="1472.23" y="111.2" width="4.7" height="3.8" fill="#d0ced1"/><rect x="1478.26" y="111.2" width="4.7" height="3.8" fill="#d0ced1"/><rect x="1484.29" y="111.2" width="4.7" height="3.8" fill="#bbb9bc"/><rect x="1466.2" y="117.2" width="4.7" height="3.8" fill="#d0ced1"/><rect x="1472.23" y="117.2" width="4.7" height="3.8" fill="#d0ced1"/><rect x="1478.26" y="117.2" width="4.7" height="3.8" fill="#d0ced1"/><rect x="1484.29" y="117.2" width="4.7" height="3.8" fill="#bbb9bc"/><rect x="1466.2" y="123.2" width="4.7" height="3.8" fill="#d0ced1"/><rect x="1472.23" y="123.2" width="4.7" height="3.8" fill="#d0ced1"/><rect x="1478.26" y="123.2" width="4.7" height="3.8" fill="#d0ced1"/><rect x="1484.29" y="123.2" width="4.7" height="3.8" fill="#bbb9bc"/><rect x="1466.2" y="129.2" width="10.7" height="3.8" fill="#bfbdc0"/><rect x="1478.26" y="129.2" width="4.7" height="3.8" fill="#d0ced1"/><rect x="1484.29" y="129.2" width="4.7" height="3.8" fill="#bbb9bc"/><rect x="1537.5" y="109.5" width="14" height="21.2" rx="1.8" fill="#f5f1f5" stroke="#bdbbbe" stroke-width="1.1"/><rect x="1539.6" y="112.1" width="9.8" height="2.8" fill="#b3b1b4"/><rect x="1539.2" y="117.3" width="2.7" height="1.9" fill="#bfbdc0"/><rect x="1543.25" y="117.3" width="2.7" height="1.9" fill="#bfbdc0"/><rect x="1547.3" y="117.3" width="2.7" height="1.9" fill="#bfbdc0"/><rect x="1539.2" y="120.22" width="2.7" height="1.9" fill="#bfbdc0"/><rect x="1543.25" y="120.22" width="2.7" height="1.9" fill="#bfbdc0"/><rect x="1547.3" y="120.22" width="2.7" height="1.9" fill="#bfbdc0"/><rect x="1539.2" y="123.14" width="2.7" height="1.9" fill="#bfbdc0"/><rect x="1543.25" y="123.14" width="2.7" height="1.9" fill="#bfbdc0"/><rect x="1547.3" y="123.14" width="2.7" height="1.9" fill="#bfbdc0"/><rect x="1539.2" y="126.06" width="2.7" height="1.9" fill="#bfbdc0"/><rect x="1543.25" y="126.06" width="2.7" height="1.9" fill="#bfbdc0"/><rect x="1547.3" y="126.06" width="2.7" height="1.9" fill="#bfbdc0"/><rect x="1533.5" y="160.5" width="20.3" height="19" fill="#f5f1f5" stroke="#bdbbbe" stroke-width="1"/><path d="M1538.7 160.5 V176 M1543.9 160.5 V176 M1549.1 160.5 V176 M1533.5 164.2 H1553.8 M1533.5 170 H1553.8 M1533.5 175.8 H1553.8" stroke="#c6c4c7" stroke-width="1" fill="none"/><rect x="1534" y="177.6" width="5.2" height="1.9" fill="#c6c4c7"/><rect x="1540.5" y="177.6" width="6" height="1.9" fill="#c6c4c7"/><rect x="1546.2" y="169.8" width="10.4" height="12.4" fill="#f1f1f1"/><rect x="1547.5" y="170.9" width="8.2" height="10.5" rx="1.3" fill="#f5f1f5" stroke="#b3b1b4" stroke-width="1"/><rect x="1549" y="172.4" width="5.2" height="1.7" fill="#b3b1b4"/><rect x="1549.1" y="175.4" width="1.1" height="1.1" fill="#b3b1b4"/><rect x="1551.15" y="175.4" width="1.1" height="1.1" fill="#b3b1b4"/><rect x="1553.2" y="175.4" width="1.1" height="1.1" fill="#b3b1b4"/><rect x="1549.1" y="177.3" width="1.1" height="1.1" fill="#b3b1b4"/><rect x="1551.15" y="177.3" width="1.1" height="1.1" fill="#b3b1b4"/><rect x="1553.2" y="177.3" width="1.1" height="1.1" fill="#b3b1b4"/><rect x="1549.1" y="179.2" width="1.1" height="1.1" fill="#b3b1b4"/><rect x="1551.15" y="179.2" width="1.1" height="1.1" fill="#b3b1b4"/><rect x="1553.2" y="179.2" width="1.1" height="1.1" fill="#b3b1b4"/></svg>
<div class="r" style="left:6px;top:238px;width:125px;height:28px;background:#fff;border:1px solid #c6c6c6"></div>
<span class="t" style="left:13.50px;top:246.00px;font-size:16px;color:#333;letter-spacing:-0.922px;">D15</span>
<svg class="r" style="left:116.6px;top:251.1px" width="7.6" height="4.8"><path d="M0 0 H7.6 L3.8 3.8 Z" fill="#777"/></svg>
<div class="r" style="left:150px;top:246px;width:3px;height:3px;background:#bcbcbc;"></div>
<div class="r" style="left:150px;top:251px;width:3px;height:3px;background:#bcbcbc;"></div>
<div class="r" style="left:150px;top:256px;width:3px;height:3px;background:#bcbcbc;"></div>
<div class="r" style="left:170px;top:238px;width:135px;height:28px;background:#fff;border:1px solid #c6c6c6"></div>
<div class="r" style="left:310px;top:238px;width:1490px;height:28px;background:#fff;border:1px solid #c6c6c6"></div>
<svg class="r" style="left:0;top:236px" width="400" height="34" viewBox="0 236 400 34"><path d="M186.6 247 L199.6 259.4" stroke="#6a6a6a" stroke-width="1.5" fill="none"/><path d="M199.4 247.6 L186 259" stroke="#6a6a6a" stroke-width="2.3" fill="none"/><path d="M231 253.6 L235.9 259 L246.3 247.2" stroke="#6e6e6e" stroke-width="2.6" fill="none"/><g transform="translate(263.60,201.75) scale(0.4684,0.4442)" fill="none" stroke="#318c5a" stroke-linecap="round"><path d="M44.3 98.2 C44 94.2 39.9 94.4 38.3 100 L30.1 130.4 C28.8 135.2 25.6 137.8 23 135.4" stroke-width="4.38"/><path d="M29.8 108.2 H41.8" stroke-width="2.62" stroke-linecap="butt"/><path d="M39.8 113 C42.2 109.4 45.4 110 46.2 113.6 L48.8 126 C49.6 129.8 52.6 130.4 55 126.6" stroke-width="4.03"/><path d="M37.6 128.4 C38.8 130.4 40.8 129.8 42.4 127.4 L51.6 112.6 C53.2 110.2 55.2 109.8 56.2 111.6" stroke-width="2.27"/><circle cx="43.9" cy="98.4" r="2.80" fill="#318c5a" stroke="none"/><circle cx="23.5" cy="135.2" r="2.80" fill="#318c5a" stroke="none"/><circle cx="38.2" cy="127.9" r="2.80" fill="#318c5a" stroke="none"/><circle cx="55.7" cy="112" r="2.80" fill="#318c5a" stroke="none"/></g></svg>
<span class="t" style="left:324.40px;top:246.00px;font-size:16px;color:#333;letter-spacing:0.000px;">=</span>
<span class="t" style="left:334.20px;top:246.00px;font-size:16px;color:#333;letter-spacing:-0.030px;font-weight:bold;">MEDIAN(D2:D14)</span>
<div class="r" style="left:0px;top:304px;width:1794px;height:650px;background:#fff;"></div>
<div class="r" style="left:0px;top:304px;width:33px;height:650px;background:#e6e6e6;"></div>
<div class="r" style="left:113px;top:304px;width:1px;height:650px;background:#d4d4d4;"></div>
<div class="r" style="left:113px;top:280px;width:1px;height:23px;background:#b5b5b5;"></div>
<div class="r" style="left:193px;top:304px;width:1px;height:650px;background:#d4d4d4;"></div>
<div class="r" style="left:193px;top:280px;width:1px;height:23px;background:#b5b5b5;"></div>
<div class="r" style="left:273px;top:304px;width:1px;height:650px;background:#d4d4d4;"></div>
<div class="r" style="left:273px;top:280px;width:1px;height:23px;background:#b5b5b5;"></div>
<div class="r" style="left:353px;top:304px;width:1px;height:650px;background:#d4d4d4;"></div>
<div class="r" style="left:353px;top:280px;width:1px;height:23px;background:#b5b5b5;"></div>
<div class="r" style="left:433px;top:304px;width:1px;height:650px;background:#d4d4d4;"></div>
<div class="r" style="left:433px;top:280px;width:1px;height:23px;background:#b5b5b5;"></div>
<div class="r" style="left:513px;top:304px;width:1px;height:650px;background:#d4d4d4;"></div>
<div class="r" style="left:513px;top:280px;width:1px;height:23px;background:#b5b5b5;"></div>
<div class="r" style="left:593px;top:304px;width:1px;height:650px;background:#d4d4d4;"></div>
<div class="r" style="left:593px;top:280px;width:1px;height:23px;background:#b5b5b5;"></div>
<div class="r" style="left:673px;top:304px;width:1px;height:650px;background:#d4d4d4;"></div>
<div class="r" style="left:673px;top:280px;width:1px;height:23px;background:#b5b5b5;"></div>
<div class="r" style="left:753px;top:304px;width:1px;height:650px;background:#d4d4d4;"></div>
<div class="r" style="left:753px;top:280px;width:1px;height:23px;background:#b5b5b5;"></div>
<div class="r" style="left:833px;top:304px;width:1px;height:650px;background:#d4d4d4;"></div>
<div class="r" style="left:833px;top:280px;width:1px;height:23px;background:#b5b5b5;"></div>
<div class="r" style="left:913px;top:304px;width:1px;height:650px;background:#d4d4d4;"></div>
<div class="r" style="left:913px;top:280px;width:1px;height:23px;background:#b5b5b5;"></div>
<div class="r" style="left:993px;top:304px;width:1px;height:650px;background:#d4d4d4;"></div>
<div class="r" style="left:993px;top:280px;width:1px;height:23px;background:#b5b5b5;"></div>
<div class="r" style="left:1073px;top:304px;width:1px;height:650px;background:#d4d4d4;"></div>
<div class="r" style="left:1073px;top:280px;width:1px;height:23px;background:#b5b5b5;"></div>
<div class="r" style="left:1153px;top:304px;width:1px;height:650px;background:#d4d4d4;"></div>
<div class="r" style="left:1153px;top:280px;width:1px;height:23px;background:#b5b5b5;"></div>
<div class="r" style="left:1233px;top:304px;width:1px;height:650px;background:#d4d4d4;"></div>
<div class="r" style="left:1233px;top:280px;width:1px;height:23px;background:#b5b5b5;"></div>
<div class="r" style="left:1313px;top:304px;width:1px;height:650px;background:#d4d4d4;"></div>
<div class="r" style="left:1313px;top:280px;width:1px;height:23px;background:#b5b5b5;"></div>
<div class="r" style="left:1393px;top:304px;width:1px;height:650px;background:#d4d4d4;"></div>
<div class="r" style="left:1393px;top:280px;width:1px;height:23px;background:#b5b5b5;"></div>
<div class="r" style="left:1473px;top:304px;width:1px;height:650px;background:#d4d4d4;"></div>
<div class="r" style="left:1473px;top:280px;width:1px;height:23px;background:#b5b5b5;"></div>
<div class="r" style="left:1553px;top:304px;width:1px;height:650px;background:#d4d4d4;"></div>
<div class="r" style="left:1553px;top:280px;width:1px;height:23px;background:#b5b5b5;"></div>
<div class="r" style="left:1633px;top:304px;width:1px;height:650px;background:#d4d4d4;"></div>
<div class="r" style="left:1633px;top:280px;width:1px;height:23px;background:#b5b5b5;"></div>
<div class="r" style="left:1713px;top:304px;width:1px;height:650px;background:#d4d4d4;"></div>
<div class="r" style="left:1713px;top:280px;width:1px;height:23px;background:#b5b5b5;"></div>
<div class="r" style="left:1793px;top:304px;width:1px;height:650px;background:#d4d4d4;"></div>
<div class="r" style="left:1793px;top:280px;width:1px;height:23px;background:#b5b5b5;"></div>
<div class="r" style="left:34px;top:327px;width:1760px;height:1px;background:#d4d4d4;"></div>
<div class="r" style="left:0px;top:327px;width:33px;height:1px;background:#c3c3c3;"></div>
<div class="r" style="left:34px;top:351px;width:1760px;height:1px;background:#d4d4d4;"></div>
<div class="r" style="left:0px;top:351px;width:33px;height:1px;background:#c3c3c3;"></div>
<div class="r" style="left:34px;top:375px;width:1760px;height:1px;background:#d4d4d4;"></div>
<div class="r" style="left:0px;top:375px;width:33px;height:1px;background:#c3c3c3;"></div>
<div class="r" style="left:34px;top:399px;width:1760px;height:1px;background:#d4d4d4;"></div>
<div class="r" style="left:0px;top:399px;width:33px;height:1px;background:#c3c3c3;"></div>
<div class="r" style="left:34px;top:423px;width:1760px;height:1px;background:#d4d4d4;"></div>
<div class="r" style="left:0px;top:423px;width:33px;height:1px;background:#c3c3c3;"></div>
<div class="r" style="left:34px;top:447px;width:1760px;height:1px;background:#d4d4d4;"></div>
<div class="r" style="left:0px;top:447px;width:33px;height:1px;background:#c3c3c3;"></div>
<div class="r" style="left:34px;top:471px;width:1760px;height:1px;background:#d4d4d4;"></div>
<div class="r" style="left:0px;top:471px;width:33px;height:1px;background:#c3c3c3;"></div>
<div class="r" style="left:34px;top:495px;width:1760px;height:1px;background:#d4d4d4;"></div>
<div class="r" style="left:0px;top:495px;width:33px;height:1px;background:#c3c3c3;"></div>
<div class="r" style="left:34px;top:519px;width:1760px;height:1px;background:#d4d4d4;"></div>
<div class="r" style="left:0px;top:519px;width:33px;height:1px;background:#c3c3c3;"></div>
<div class="r" style="left:34px;top:543px;width:1760px;height:1px;background:#d4d4d4;"></div>
<div class="r" style="left:0px;top:543px;width:33px;height:1px;background:#c3c3c3;"></div>
<div class="r" style="left:34px;top:567px;width:1760px;height:1px;background:#d4d4d4;"></div>
<div class="r" style="left:0px;top:567px;width:33px;height:1px;background:#c3c3c3;"></div>
<div class="r" style="left:34px;top:591px;width:1760px;height:1px;background:#d4d4d4;"></div>
<div class="r" style="left:0px;top:591px;width:33px;height:1px;background:#c3c3c3;"></div>
<div class="r" style="left:34px;top:615px;width:1760px;height:1px;background:#d4d4d4;"></div>
<div class="r" style="left:0px;top:615px;width:33px;height:1px;background:#c3c3c3;"></div>
<div class="r" style="left:34px;top:639px;width:1760px;height:1px;background:#d4d4d4;"></div>
<div class="r" style="left:0px;top:639px;width:33px;height:1px;background:#c3c3c3;"></div>
<div class="r" style="left:34px;top:663px;width:1760px;height:1px;background:#d4d4d4;"></div>
<div class="r" style="left:0px;top:663px;width:33px;height:1px;background:#c3c3c3;"></div>
<div class="r" style="left:34px;top:687px;width:1760px;height:1px;background:#d4d4d4;"></div>
<div class="r" style="left:0px;top:687px;width:33px;height:1px;background:#c3c3c3;"></div>
<div class="r" style="left:34px;top:711px;width:1760px;height:1px;background:#d4d4d4;"></div>
<div class="r" style="left:0px;top:711px;width:33px;height:1px;background:#c3c3c3;"></div>
<div class="r" style="left:34px;top:735px;width:1760px;height:1px;background:#d4d4d4;"></div>
<div class="r" style="left:0px;top:735px;width:33px;height:1px;background:#c3c3c3;"></div>
<div class="r" style="left:34px;top:759px;width:1760px;height:1px;background:#d4d4d4;"></div>
<div class="r" style="left:0px;top:759px;width:33px;height:1px;background:#c3c3c3;"></div>
<div class="r" style="left:34px;top:783px;width:1760px;height:1px;background:#d4d4d4;"></div>
<div class="r" style="left:0px;top:783px;width:33px;height:1px;background:#c3c3c3;"></div>
<div class="r" style="left:34px;top:807px;width:1760px;height:1px;background:#d4d4d4;"></div>
<div class="r" style="left:0px;top:807px;width:33px;height:1px;background:#c3c3c3;"></div>
<div class="r" style="left:34px;top:831px;width:1760px;height:1px;background:#d4d4d4;"></div>
<div class="r" style="left:0px;top:831px;width:33px;height:1px;background:#c3c3c3;"></div>
<div class="r" style="left:34px;top:855px;width:1760px;height:1px;background:#d4d4d4;"></div>
<div class="r" style="left:0px;top:855px;width:33px;height:1px;background:#c3c3c3;"></div>
<div class="r" style="left:34px;top:879px;width:1760px;height:1px;background:#d4d4d4;"></div>
<div class="r" style="left:0px;top:879px;width:33px;height:1px;background:#c3c3c3;"></div>
<div class="r" style="left:34px;top:903px;width:1760px;height:1px;background:#d4d4d4;"></div>
<div class="r" style="left:0px;top:903px;width:33px;height:1px;background:#c3c3c3;"></div>
<div class="r" style="left:34px;top:927px;width:1760px;height:1px;background:#d4d4d4;"></div>
<div class="r" style="left:0px;top:927px;width:33px;height:1px;background:#c3c3c3;"></div>
<div class="r" style="left:34px;top:951px;width:1760px;height:1px;background:#d4d4d4;"></div>
<div class="r" style="left:0px;top:951px;width:33px;height:1px;background:#c3c3c3;"></div>
<div class="r" style="left:34px;top:975px;width:1760px;height:1px;background:#d4d4d4;"></div>
<div class="r" style="left:0px;top:975px;width:33px;height:1px;background:#c3c3c3;"></div>
<div class="r" style="left:33px;top:280px;width:1px;height:674px;background:#a6a6a6;"></div>
<div class="r" style="left:0px;top:303px;width:1794px;height:1px;background:#a6a6a6;"></div>
<svg class="r" style="left:14px;top:284px" width="17" height="17"><path d="M16.2 0.4 V15.9 H0.3 Z" fill="#b7b7b7"/></svg>
<div class="r" style="left:274px;top:280px;width:79px;height:23px;background:#d2d2d2;"></div>
<div class="r" style="left:273px;top:302px;width:81px;height:2px;background:#217346;"></div>
<div class="r" style="left:0px;top:640px;width:32px;height:23px;background:#d2d2d2;"></div>
<div class="r" style="left:32px;top:639px;width:2px;height:25px;background:#217346;"></div>
<span class="t" style="left:68.00px;top:284.00px;font-size:16.5px;color:#111;letter-spacing:0.000px;">A</span>
<span class="t" style="left:148.00px;top:284.00px;font-size:16.5px;color:#111;letter-spacing:0.000px;">B</span>
<span class="t" style="left:227.54px;top:284.00px;font-size:16.5px;color:#111;letter-spacing:0.000px;">C</span>
<span class="t" style="left:307.54px;top:284.00px;font-size:16.5px;color:#217346;letter-spacing:0.000px;">D</span>
<span class="t" style="left:388.00px;top:284.00px;font-size:16.5px;color:#111;letter-spacing:0.000px;">E</span>
<span class="t" style="left:468.46px;top:284.00px;font-size:16.5px;color:#111;letter-spacing:0.000px;">F</span>
<span class="t" style="left:547.08px;top:284.00px;font-size:16.5px;color:#111;letter-spacing:0.000px;">G</span>
<span class="t" style="left:627.54px;top:284.00px;font-size:16.5px;color:#111;letter-spacing:0.000px;">H</span>
<span class="t" style="left:711.21px;top:284.00px;font-size:16.5px;color:#111;letter-spacing:0.000px;">I</span>
<span class="t" style="left:789.38px;top:284.00px;font-size:16.5px;color:#111;letter-spacing:0.000px;">J</span>
<span class="t" style="left:868.00px;top:284.00px;font-size:16.5px;color:#111;letter-spacing:0.000px;">K</span>
<span class="t" style="left:948.91px;top:284.00px;font-size:16.5px;color:#111;letter-spacing:0.000px;">L</span>
<span class="t" style="left:1026.63px;top:284.00px;font-size:16.5px;color:#111;letter-spacing:0.000px;">M</span>
<span class="t" style="left:1107.54px;top:284.00px;font-size:16.5px;color:#111;letter-spacing:0.000px;">N</span>
<span class="t" style="left:1187.08px;top:284.00px;font-size:16.5px;color:#111;letter-spacing:0.000px;">O</span>
<span class="t" style="left:1268.00px;top:284.00px;font-size:16.5px;color:#111;letter-spacing:0.000px;">P</span>
<span class="t" style="left:1347.08px;top:284.00px;font-size:16.5px;color:#111;letter-spacing:0.000px;">Q</span>
<span class="t" style="left:1427.54px;top:284.00px;font-size:16.5px;color:#111;letter-spacing:0.000px;">R</span>
<span class="t" style="left:1508.00px;top:284.00px;font-size:16.5px;color:#111;letter-spacing:0.000px;">S</span>
<span class="t" style="left:1588.46px;top:284.00px;font-size:16.5px;color:#111;letter-spacing:0.000px;">T</span>
<span class="t" style="left:1667.54px;top:284.00px;font-size:16.5px;color:#111;letter-spacing:0.000px;">U</span>
<span class="t" style="left:1748.00px;top:284.00px;font-size:16.5px;color:#111;letter-spacing:0.000px;">V</span>
<span class="t" style="left:12.44px;top:308.00px;font-size:16.5px;color:#111;letter-spacing:0.000px;">1</span>
<span class="t" style="left:12.44px;top:332.00px;font-size:16.5px;color:#111;letter-spacing:0.000px;">2</span>
<span class="t" style="left:12.44px;top:356.00px;font-size:16.5px;color:#111;letter-spacing:0.000px;">3</span>
<span class="t" style="left:12.44px;top:380.00px;font-size:16.5px;color:#111;letter-spacing:0.000px;">4</span>
<span class="t" style="left:12.44px;top:404.00px;font-size:16.5px;color:#111;letter-spacing:0.000px;">5</span>
<span class="t" style="left:12.44px;top:428.00px;font-size:16.5px;color:#111;letter-spacing:0.000px;">6</span>
<span class="t" style="left:12.44px;top:452.00px;font-size:16.5px;color:#111;letter-spacing:0.000px;">7</span>
<span class="t" style="left:12.44px;top:476.00px;font-size:16.5px;color:#111;letter-spacing:0.000px;">8</span>
<span class="t" style="left:12.44px;top:500.00px;font-size:16.5px;color:#111;letter-spacing:0.000px;">9</span>
<span class="t" style="left:8.08px;top:524.00px;font-size:16.5px;color:#111;letter-spacing:-0.913px;">10</span>
<span class="t" style="left:8.66px;top:548.00px;font-size:16.5px;color:#111;letter-spacing:-0.855px;">11</span>
<span class="t" style="left:8.08px;top:572.00px;font-size:16.5px;color:#111;letter-spacing:-0.913px;">12</span>
<span class="t" style="left:8.08px;top:596.00px;font-size:16.5px;color:#111;letter-spacing:-0.913px;">13</span>
<span class="t" style="left:8.08px;top:620.00px;font-size:16.5px;color:#111;letter-spacing:-0.913px;">14</span>
<span class="t" style="left:8.08px;top:644.00px;font-size:16.5px;color:#217346;letter-spacing:-0.913px;">15</span>
<span class="t" style="left:8.08px;top:668.00px;font-size:16.5px;color:#111;letter-spacing:-0.913px;">16</span>
<span class="t" style="left:8.08px;top:692.00px;font-size:16.5px;color:#111;letter-spacing:-0.913px;">17</span>
<span class="t" style="left:8.08px;top:716.00px;font-size:16.5px;color:#111;letter-spacing:-0.913px;">18</span>
<span class="t" style="left:8.08px;top:740.00px;font-size:16.5px;color:#111;letter-spacing:-0.913px;">19</span>
<span class="t" style="left:8.08px;top:764.00px;font-size:16.5px;color:#111;letter-spacing:-0.913px;">20</span>
<span class="t" style="left:8.08px;top:788.00px;font-size:16.5px;color:#111;letter-spacing:-0.913px;">21</span>
<span class="t" style="left:8.08px;top:812.00px;font-size:16.5px;color:#111;letter-spacing:-0.913px;">22</span>
<span class="t" style="left:8.08px;top:836.00px;font-size:16.5px;color:#111;letter-spacing:-0.913px;">23</span>
<span class="t" style="left:8.08px;top:860.00px;font-size:16.5px;color:#111;letter-spacing:-0.913px;">24</span>
<span class="t" style="left:8.08px;top:884.00px;font-size:16.5px;color:#111;letter-spacing:-0.913px;">25</span>
<span class="t" style="left:8.08px;top:908.00px;font-size:16.5px;color:#111;letter-spacing:-0.913px;">26</span>
<span class="t" style="left:8.08px;top:932.00px;font-size:16.5px;color:#111;letter-spacing:-0.913px;">27</span>
<span class="t" style="left:217.40px;top:308.00px;font-size:16.5px;color:#000;letter-spacing:-1.022px;font-weight:bold;">Year</span>
<span class="t" style="left:295.30px;top:308.00px;font-size:16.5px;color:#000;letter-spacing:-1.404px;font-weight:bold;">Sales</span>
<span class="t" style="left:234.60px;top:332.00px;font-size:16.5px;color:#000;letter-spacing:-0.571px;">2006</span>
<span class="t" style="left:332.20px;top:332.00px;font-size:16.5px;color:#000;letter-spacing:-0.748px;">42</span>
<span class="t" style="left:234.60px;top:356.00px;font-size:16.5px;color:#000;letter-spacing:-0.571px;">2007</span>
<span class="t" style="left:332.20px;top:356.00px;font-size:16.5px;color:#000;letter-spacing:-0.748px;">47</span>
<span class="t" style="left:234.60px;top:380.00px;font-size:16.5px;color:#000;letter-spacing:-0.571px;">2008</span>
<span class="t" style="left:332.20px;top:380.00px;font-size:16.5px;color:#000;letter-spacing:-0.748px;">56</span>
<span class="t" style="left:234.60px;top:404.00px;font-size:16.5px;color:#000;letter-spacing:-0.571px;">2009</span>
<span class="t" style="left:332.20px;top:404.00px;font-size:16.5px;color:#000;letter-spacing:-0.748px;">43</span>
<span class="t" style="left:234.60px;top:428.00px;font-size:16.5px;color:#000;letter-spacing:-0.571px;">2010</span>
<span class="t" style="left:332.20px;top:428.00px;font-size:16.5px;color:#000;letter-spacing:-0.748px;">54</span>
<span class="t" style="left:234.60px;top:452.00px;font-size:16.5px;color:#000;letter-spacing:-0.158px;">2011</span>
<span class="t" style="left:332.20px;top:452.00px;font-size:16.5px;color:#000;letter-spacing:-0.748px;">61</span>
<span class="t" style="left:234.60px;top:476.00px;font-size:16.5px;color:#000;letter-spacing:-0.571px;">2012</span>
<span class="t" style="left:332.20px;top:476.00px;font-size:16.5px;color:#000;letter-spacing:-0.748px;">48</span>
<span class="t" style="left:234.60px;top:500.00px;font-size:16.5px;color:#000;letter-spacing:-0.571px;">2013</span>
<span class="t" style="left:332.20px;top:500.00px;font-size:16.5px;color:#000;letter-spacing:-0.748px;">63</span>
<span class="t" style="left:234.60px;top:524.00px;font-size:16.5px;color:#000;letter-spacing:-0.571px;">2014</span>
<span class="t" style="left:332.20px;top:524.00px;font-size:16.5px;color:#000;letter-spacing:-0.748px;">54</span>
<span class="t" style="left:234.60px;top:548.00px;font-size:16.5px;color:#000;letter-spacing:-0.571px;">2015</span>
<span class="t" style="left:332.20px;top:548.00px;font-size:16.5px;color:#000;letter-spacing:-0.748px;">59</span>
<span class="t" style="left:234.60px;top:572.00px;font-size:16.5px;color:#000;letter-spacing:-0.571px;">2016</span>
<span class="t" style="left:332.20px;top:572.00px;font-size:16.5px;color:#000;letter-spacing:-0.748px;">49</span>
<span class="t" style="left:234.60px;top:596.00px;font-size:16.5px;color:#000;letter-spacing:-0.571px;">2017</span>
<span class="t" style="left:332.20px;top:596.00px;font-size:16.5px;color:#000;letter-spacing:-0.748px;">53</span>
<span class="t" style="left:197.70px;top:644.00px;font-size:16.5px;color:#000;letter-spacing:0.044px;font-weight:bold;">Median:</span>
<span class="t" style="left:276.00px;top:644.00px;font-size:16.5px;color:#000;letter-spacing:-0.508px;">D2:D14)</span>
<div class="r" style="left:272px;top:638px;width:79px;height:23px;border:2px solid #217346"></div>
<div class="r" style="left:351px;top:661px;width:5.5px;height:5.5px;background:#fff;"></div>
<div class="r" style="left:352px;top:662px;width:4px;height:4px;background:#217346;"></div>
<div class="r" style="left:590px;top:259px;width:889px;height:438px;border:1px solid #2f9a5c;background:#f0f0f0;box-shadow:0 3px 22px 2px rgba(0,0,0,.38)"></div>
<div class="r" style="left:591px;top:260px;width:889px;height:37px;background:#fff;"></div>
<span class="t" style="left:600.40px;top:271.00px;font-size:15.5px;color:#000;letter-spacing:-0.380px;">Function Arguments</span>
<span class="t" style="left:1389.50px;top:270.00px;font-size:17px;color:#000;letter-spacing:0.000px;">?</span>
<svg class="r" style="left:1441px;top:269px" width="18" height="18"><path d="M3.1 3.1 L15 15 M15 3.1 L3.1 15" stroke="#000" stroke-width="1.15" fill="none"/></svg>
<div class="r" style="left:600px;top:314px;width:868px;height:169px;border:1px solid #dcdcdc;box-shadow:inset 1px 1px 0 #fafafa, 1px 1px 0 #fafafa"></div>
<div class="r" style="left:607px;top:308px;width:54px;height:14px;background:#f0f0f0;"></div>
<span class="t" style="left:609.60px;top:309.00px;font-size:13.5px;color:#000;letter-spacing:-0.840px;">MEDIAN</span>
<span class="t" style="left:736.50px;top:339.00px;font-size:13.5px;color:#000;letter-spacing:-0.452px;font-weight:bold;">Number1</span>
<span class="t" style="left:738.50px;top:369.00px;font-size:13.5px;color:#000;letter-spacing:-0.288px;">Number2</span>
<div class="r" style="left:807px;top:332px;width:261px;height:24px;background:#fff;border:1px solid #a9a9a9;box-shadow:inset 0 0 0 1px #e9e9e9"></div>
<div class="r" style="left:1068px;top:332px;width:24px;height:22px;background:#e1e1e1;border:2px solid #adadad;border-left-width:1px"></div>
<div class="r" style="left:1072px;top:336.8px;width:18px;height:16.2px;background:#fff;"></div>
<svg class="r" style="left:1075.9px;top:338px" width="10" height="14"><path d="M4.6 0 L9.2 4.6 V5.7 H6.2 V9.6 H3 V5.7 H0 V4.6 Z M0 11 H9.2 V12.8 H0 Z" fill="#000"/></svg>
<div class="r" style="left:807px;top:362px;width:261px;height:24px;background:#fff;border:1px solid #a9a9a9;box-shadow:inset 0 0 0 1px #e9e9e9"></div>
<div class="r" style="left:1068px;top:362px;width:24px;height:22px;background:#e1e1e1;border:2px solid #adadad;border-left-width:1px"></div>
<div class="r" style="left:1072px;top:366.8px;width:18px;height:16.2px;background:#fff;"></div>
<svg class="r" style="left:1075.9px;top:368px" width="10" height="14"><path d="M4.6 0 L9.2 4.6 V5.7 H6.2 V9.6 H3 V5.7 H0 V4.6 Z M0 11 H9.2 V12.8 H0 Z" fill="#000"/></svg>
<div class="r" style="left:812px;top:336px;width:42px;height:17px;background:#c8c8c8;"></div>
<span class="t" style="left:812.30px;top:339.00px;font-size:13.5px;color:#000;letter-spacing:-0.876px;">D2:D14</span>
<span class="t" style="left:1109.60px;top:339.00px;font-size:13.5px;color:#000;letter-spacing:0.000px;">=</span>
<span class="t" style="left:1109.60px;top:369.00px;font-size:13.5px;color:#000;letter-spacing:0.000px;">=</span>
<span class="t" style="left:1132.90px;top:339.00px;font-size:13.5px;color:#000;letter-spacing:-0.640px;">{42;47;56;43;54;61;48;63;54;59;49;53;0}</span>
<span class="t" style="left:1132.50px;top:369.00px;font-size:13.5px;color:#a5a5a5;letter-spacing:-0.421px;font-weight:bold;">number</span>
<span class="t" style="left:1109.60px;top:494.00px;font-size:13.5px;color:#000;letter-spacing:0.000px;">=</span>
<span class="t" style="left:1132.30px;top:494.00px;font-size:13.5px;color:#000;letter-spacing:-1.090px;">53.5</span>
<span class="t" style="left:600.30px;top:515.00px;font-size:13.5px;color:#000;letter-spacing:-0.104px;">Returns the median, or the number in the middle of the set of given numbers.</span>
<span class="t" style="left:833.60px;top:547.00px;font-size:13.5px;color:#000;letter-spacing:-0.388px;font-weight:bold;">Number1:</span>
<span class="t" style="left:908.10px;top:547.00px;font-size:13.5px;color:#000;letter-spacing:-0.183px;">number1,number2,... are 1 to 255 numbers or names, arrays, or references that contain numbers</span>
<span class="t" style="left:908.10px;top:564.00px;font-size:13.5px;color:#000;letter-spacing:-0.179px;">for which you want the median.</span>
<div class="r" style="left:600px;top:610px;width:871px;height:1px;background:#dcdcdc;"></div>
<span class="t" style="left:600.30px;top:630.00px;font-size:13.5px;color:#000;letter-spacing:-0.187px;">Formula result =</span>
<span class="t" style="left:710.40px;top:630.00px;font-size:13.5px;color:#000;letter-spacing:-1.024px;">53.5</span>
<span class="t" style="left:600.30px;top:668.00px;font-size:13.5px;color:#0563c1;letter-spacing:-0.131px;text-decoration:underline;">Help on this function</span>
<div class="r" style="left:1231px;top:659px;width:108px;height:25px;background:#e1e1e1;border:2px solid #0078d7"></div>
<div class="r" style="left:1358px;top:659px;width:110px;height:27px;background:#e1e1e1;border:1px solid #adadad"></div>
<span class="t" style="left:1278.30px;top:668.00px;font-size:13.5px;color:#000;letter-spacing:-2.107px;">OK</span>
<span class="t" style="left:1395.30px;top:668.00px;font-size:13.5px;color:#000;letter-spacing:-0.905px;">Cancel</span>
</body></html>
